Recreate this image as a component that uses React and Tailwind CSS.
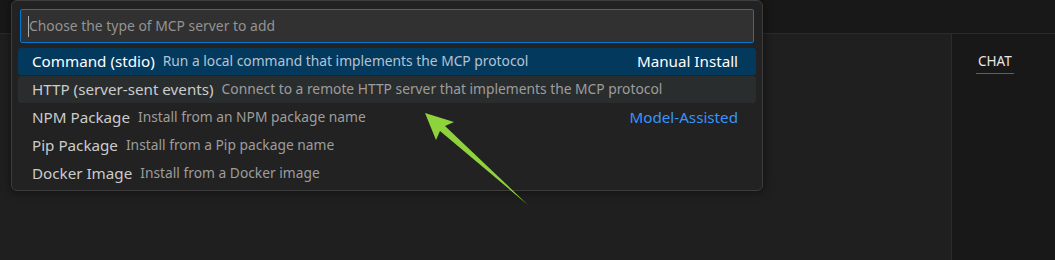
const options = [
  { label: 'Command (stdio)', desc: 'Run a local command that implements the MCP protocol', tag: 'Manual Install', state: 'active' },
  { label: 'HTTP (server-sent events)', desc: 'Connect to a remote HTTP server that implements the MCP protocol', state: 'hover' },
  { label: 'NPM Package', desc: 'Install from an NPM package name', tag: 'Model-Assisted' },
  { label: 'Pip Package', desc: 'Install from a Pip package name' },
  { label: 'Docker Image', desc: 'Install from a Docker image' },
];

const font = { fontFamily: '"Segoe UI", "Noto Sans", "Open Sans", sans-serif' };

const Row = ({ option }) => {
  const active = option.state === 'active';
  const hover = option.state === 'hover';
  return (
    <div
      className={`h-[27px] flex items-center pl-[14px] pr-[18px] rounded-[3px] ${
        active ? 'bg-[#04395e]' : hover ? 'bg-[#2a2d2e]' : ''
      }`}
    >
      <span className={`text-[15.2px] whitespace-nowrap ${active ? 'text-white' : 'text-[#cccccc]'}`}>{option.label}</span>
      <span className={`ml-[8px] text-[13.8px] whitespace-nowrap ${active ? 'text-[#b3c4d3]' : 'text-[#9d9d9d]'}`}>{option.desc}</span>
      {option.tag && (
        <span className={`ml-auto text-[15.2px] whitespace-nowrap ${active ? 'text-white' : 'text-[#3794ff]'}`}>{option.tag}</span>
      )}
    </div>
  );
};

const App = () => {
  return (
    <div className="relative w-[1055px] h-[260px] overflow-hidden bg-[#1f1f1f] flex flex-col" style={font}>
      {/* title / tab strip */}
      <div className="h-[34px] bg-[#181818] border-b border-[#2b2b2b] shrink-0" />

      <div className="flex flex-1">
        <div className="flex-1 bg-[#1f1f1f]" />
        <div className="w-[104px] bg-[#181818] border-l border-[#2b2b2b] pl-[24px] pt-[14px]">
          <div className="inline-flex flex-col items-center">
            <span className="text-[13.5px] text-[#e7e7e7] leading-[18px] px-[2px]">CHAT</span>
            <div className="mt-[3px] h-px w-full bg-[#0078d4]" />
          </div>
        </div>
      </div>

      {/* quick pick */}
      <div className="absolute left-[11px] top-0 w-[752px] h-[191px] bg-[#222222] border border-[#3d3d3d] rounded-[6px] shadow-[0_0_8px_2px_rgba(0,0,0,0.36)] px-[6px] pt-[8px]">
        <div className="mx-[2px] h-[34px] bg-[#313131] border border-[#0078d4] rounded-[2px] flex items-center pl-[7px]">
          <div className="w-px h-[21px] bg-[#aeafad]" />
          <span className="text-[13.9px] text-[#939393] whitespace-nowrap">Choose the type of MCP server to add</span>
        </div>
        <div className="mt-[5px] flex flex-col gap-px">
          {options.map((o) => (
            <Row key={o.label} option={o} />
          ))}
        </div>
      </div>

      {/* annotation arrow */}
      <svg className="absolute left-0 top-0 pointer-events-none" width="1055" height="260">
        <polygon points="425,113 454,122 445,126 528,205 440,131 436,140" fill="#8fd33c" />
      </svg>
    </div>
  );
};

export default App;
